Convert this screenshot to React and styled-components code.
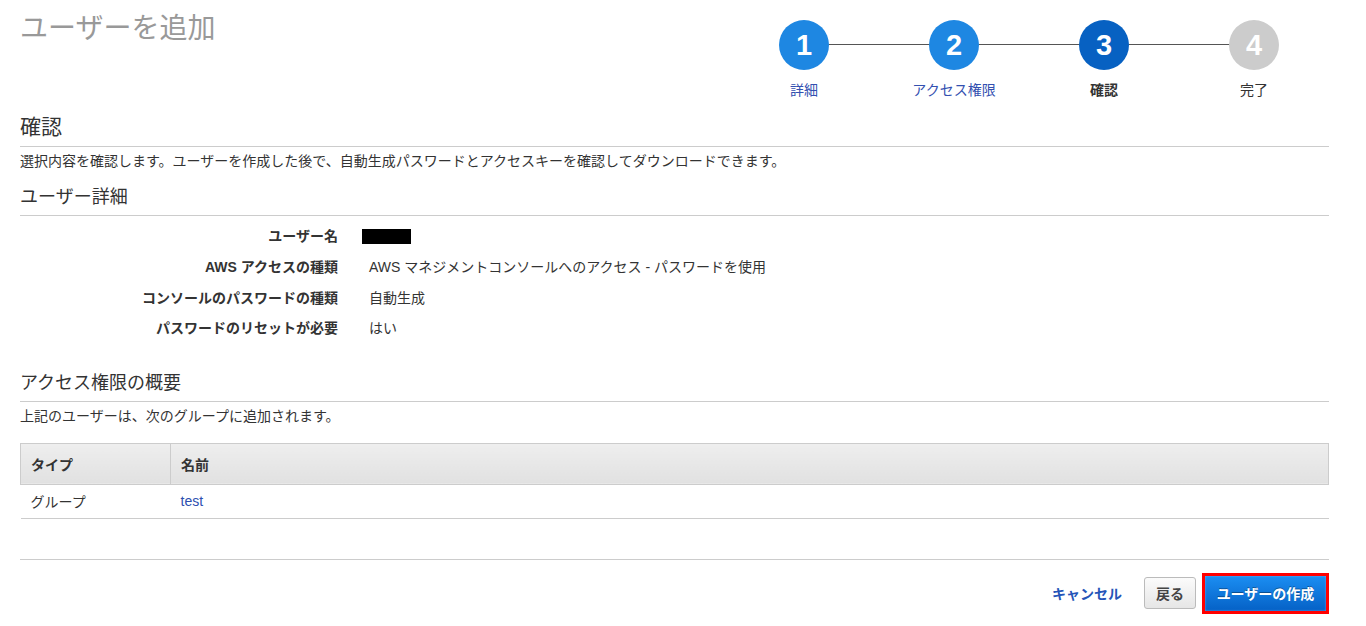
import styled, { createGlobalStyle } from 'styled-components';

const GlobalStyle = createGlobalStyle`
  body {
    margin: 0;
    background: #fff;
    font-family: "Liberation Sans", "Noto Sans CJK JP", sans-serif;
    color: #333;
  }
`

const steps = [
  { num: 1, label: '詳細', state: 'done' },
  { num: 2, label: 'アクセス権限', state: 'done' },
  { num: 3, label: '確認', state: 'current' },
  { num: 4, label: '完了', state: 'todo' },
]

const details = [
  { label: 'ユーザー名', value: null },
  { label: 'AWS アクセスの種類', value: 'AWS マネジメントコンソールへのアクセス - パスワードを使用' },
  { label: 'コンソールのパスワードの種類', value: '自動生成' },
  { label: 'パスワードのリセットが必要', value: 'はい' },
]

export default function App(){
  return(
    <Page>
      <GlobalStyle />
      <Header>
        <Title>ユーザーを追加</Title>
        <Stepper>
          {steps.map(function(step, index){
            return(
              <Step key={step.num} $last={index === steps.length - 1}>
                <Circle $state={step.state}>{step.num}</Circle>
                <StepLabel $state={step.state}>{step.label}</StepLabel>
              </Step>
            );
          })}
        </Stepper>
      </Header>

      <SectionTitle $size={21}>確認</SectionTitle>
      <Description>選択内容を確認します。ユーザーを作成した後で、自動生成パスワードとアクセスキーを確認してダウンロードできます。</Description>

      <SectionTitle $size={18} $top={16}>ユーザー詳細</SectionTitle>
      <DetailGrid>
        {details.map(function(item){
          return(
            <DetailRow key={item.label}>
              <DetailLabel>{item.label}</DetailLabel>
              <DetailValue>{item.value === null ? <Redacted /> : item.value}</DetailValue>
            </DetailRow>
          );
        })}
      </DetailGrid>

      <SectionTitle $size={18} $top={29}>アクセス権限の概要</SectionTitle>
      <Description>上記のユーザーは、次のグループに追加されます。</Description>

      <Table>
        <thead>
          <tr>
            <HeadCell $w={129}>タイプ</HeadCell>
            <HeadCell>名前</HeadCell>
          </tr>
        </thead>
        <tbody>
          <tr>
            <BodyCell>グループ</BodyCell>
            <BodyCell><Link href='#'>test</Link></BodyCell>
          </tr>
        </tbody>
      </Table>

      <Footer>
        <CancelLink href='#'>キャンセル</CancelLink>
        <Button>戻る</Button>
        <PrimaryButton>ユーザーの作成</PrimaryButton>
      </Footer>
    </Page>
  )
}

const Page = styled.div`
  padding: 0 37px 0 20px;
  font-size: 14px;
`

const Header = styled.div`
  display: flex;
  justify-content: space-between;
  align-items: flex-start;
`

const Title = styled.h1`
  margin: 12px 0 0;
  font-size: 28px;
  line-height: 34px;
  font-weight: normal;
  color: #999;
`

const Stepper = styled.div`
  display: grid;
  grid-template-columns: repeat(4, 150px);
  padding-top: 20px;
`

const Step = styled.div`
  position: relative;
  display: flex;
  flex-direction: column;
  align-items: center;

  &::before {
    content: '';
    display: ${(props) => props.$last ? 'none' : 'block'};
    position: absolute;
    top: 24px;
    left: 50%;
    width: 100%;
    height: 1px;
    background: #555;
  }
`

const circleColors = {
  done: '#1e87e2',
  current: '#0761c2',
  todo: '#cccccc',
}

const Circle = styled.div`
  position: relative;
  z-index: 1;
  width: 50px;
  height: 50px;
  border-radius: 50%;
  background: ${(props) => circleColors[props.$state]};
  color: #fff;
  display: flex;
  align-items: center;
  justify-content: center;
  font-family: "Liberation Sans", sans-serif;
  font-weight: bold;
  font-size: 29px;
`

const StepLabel = styled.div`
  margin-top: 11px;
  line-height: 18px;
  font-size: 14px;
  color: ${(props) => props.$state === 'done' ? '#3350b0' : '#333'};
  font-weight: ${(props) => props.$state === 'current' ? 'bold' : 'normal'};
`

const SectionTitle = styled.h2`
  margin: ${(props) => props.$top ?? 15}px 0 0;
  padding-bottom: 7px;
  border-bottom: 1px solid #ccc;
  font-size: ${(props) => props.$size}px;
  line-height: ${(props) => props.$size + 4}px;
  font-weight: normal;
  color: #333;
`

const Description = styled.p`
  margin: 5px 0 0;
  line-height: 18px;
  color: #333;
`

const DetailGrid = styled.div`
  margin-top: 4px;
  display: flex;
  flex-direction: column;
`

const DetailRow = styled.div`
  display: grid;
  grid-template-columns: 318px 1fr;
  column-gap: 31px;
  align-items: center;
  height: 30.7px;
`

const DetailLabel = styled.div`
  text-align: right;
  font-weight: bold;
  color: #333;
`

const DetailValue = styled.div`
  color: #333;
`

const Redacted = styled.span`
  display: inline-block;
  vertical-align: middle;
  margin-left: -7px;
  width: 49px;
  height: 15px;
  background: #000;
`

const Table = styled.table`
  margin-top: 18px;
  width: 100%;
  border-collapse: collapse;
  font-size: 14px;
`

const HeadCell = styled.th`
  width: ${(props) => props.$w ? props.$w + 'px' : 'auto'};
  height: 40px;
  padding: 0 10px;
  text-align: left;
  font-weight: bold;
  color: #333;
  border: 1px solid #ccc;
  background: linear-gradient(#eeeeee, #e1e1e1);
`

const BodyCell = styled.td`
  height: 33px;
  padding: 0 10px;
  border-bottom: 1px solid #ccc;
  color: #333;
`

const Link = styled.a`
  color: #2d4fb0;
  text-decoration: none;
`

const Footer = styled.div`
  margin-top: 40px;
  padding-top: 13px;
  border-top: 1px solid #ccc;
  display: flex;
  justify-content: flex-end;
  align-items: center;
`

const CancelLink = styled.a`
  margin-right: 22px;
  color: #2555b8;
  font-weight: bold;
  text-decoration: none;
`

const Button = styled.button`
  height: 32px;
  padding: 0 11px;
  border: 1px solid #bbb;
  border-radius: 3px;
  background: linear-gradient(#fbfbfb, #e6e6e6);
  font-family: inherit;
  font-size: 14px;
  font-weight: bold;
  color: #444;
`

const PrimaryButton = styled.button`
  margin-left: 6px;
  height: 41px;
  width: 127px;
  border: 3px solid #f00;
  background: linear-gradient(#1b8ef2, #0561c6);
  box-shadow: inset 0 0 2px #6bb6ff;
  font-family: inherit;
  font-size: 14px;
  font-weight: bold;
  color: #fff;
  text-shadow: 0 -1px 0 rgba(0, 0, 0, 0.35);
`
